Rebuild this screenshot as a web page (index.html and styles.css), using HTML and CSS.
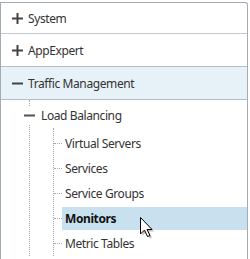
FILE: index.html
```html
<!DOCTYPE html>
<html lang="en">
<head>
    <meta charset="UTF-8">
    <title>Navigation Tree</title>
    <link rel="stylesheet" href="styles.css">
</head>
<body>

    <div class="panel">
        <div class="section">
            <svg class="toggle" width="11" height="11" viewBox="0 0 11 11"><rect x="0" y="4.5" width="11" height="2"/><rect x="4.5" y="0" width="2" height="11"/></svg>
            <span>System</span>
        </div>
        <div class="section">
            <svg class="toggle" width="11" height="11" viewBox="0 0 11 11"><rect x="0" y="4.5" width="11" height="2"/><rect x="4.5" y="0" width="2" height="11"/></svg>
            <span>AppExpert</span>
        </div>
        <div class="section open">
            <svg class="toggle" width="11" height="11" viewBox="0 0 11 11"><rect x="0" y="4.5" width="11" height="2"/></svg>
            <span>Traffic Management</span>
        </div>

        <div class="tree">
            <div class="node">
                <svg class="node-toggle" width="11" height="11" viewBox="0 0 11 11"><rect x="0" y="4.5" width="11" height="2"/></svg>
                <span>Load Balancing</span>
            </div>
            <ul class="leaves">
                <li><span>Virtual Servers</span></li>
                <li><span>Services</span></li>
                <li><span>Service Groups</span></li>
                <li class="selected"><span>Monitors</span></li>
                <li><span>Metric Tables</span></li>
            </ul>
        </div>

        <!-- mouse pointer over the selected item -->
        <svg class="cursor" width="16" height="24" viewBox="0 0 16 24">
            <path d="M2.5 2.5 L2.5 19 L6.5 15 L9.5 21.5 L12 20.5 L9 14.5 L14 14.5 Z" fill="rgba(0,0,0,0.25)"/>
            <path d="M0.5 0.5 L0.5 17 L4.5 13 L7.5 19.5 L10 18.5 L7 12.5 L12 12.5 Z" fill="#fff" stroke="#000" stroke-width="1" stroke-linejoin="miter"/>
        </svg>
    </div>

</body>
</html>
```

FILE: styles.css
```css
body {
    margin: 0;
    font-family: "Noto Sans", "Open Sans", sans-serif;
    font-size: 12px;
    letter-spacing: -0.4px;
    color: #333;
    background: #fff;
}

.panel {
    position: relative;
    box-sizing: border-box;
    width: 248px;
    height: 257px;
    margin-top: 2px;
    border: 1px solid #a4acb3;
    border-bottom: none;
    border-top-right-radius: 3px;
    overflow: hidden;
}

.section {
    display: flex;
    align-items: center;
    height: 32px;
    padding-left: 11px;
    border-bottom: 1px solid #c4c8cc;
}

.section:first-child {
    height: 30px;
}

.section.open {
    background-color: #e7f1f8;
    border-top: 1px solid #b6bec5;
    border-bottom: 1px solid #b6bec5;
    margin-top: -1px;
}

.toggle {
    fill: #444;
    margin-right: 5px;
}

.tree {
    margin-left: 28px;
    border-left: 1px dotted #a8a8a8;
}

.node {
    display: flex;
    align-items: center;
    height: 31px;
    margin-left: -6px;
}

.node-toggle {
    fill: #555;
    background: #fff;
    padding: 3px 0;
    margin-right: 6px;
}

.leaves {
    list-style: none;
    margin: -3px 0 0 23px;
    padding: 3px 0 0 0;
    border-left: 1px dotted #a8a8a8;
}

.leaves li {
    display: flex;
    align-items: center;
    height: 25px;
}

.leaves li::before {
    content: "";
    width: 8px;
    border-top: 1px dotted #a8a8a8;
}

.leaves li span {
    flex: 1;
    height: 23px;
    line-height: 23px;
    padding-left: 3px;
}

.leaves li.selected span {
    background-color: #c9e0ef;
    font-weight: bold;
    color: #111;
}

.cursor {
    position: absolute;
    left: 139px;
    top: 214px;
}
```
